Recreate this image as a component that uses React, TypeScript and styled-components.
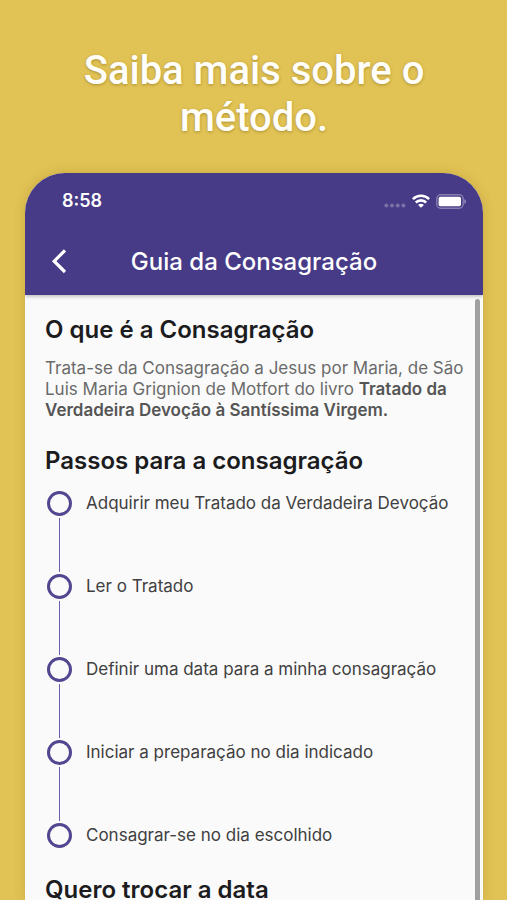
import React from "react";
import styled, { createGlobalStyle } from "styled-components";

const GlobalStyle = createGlobalStyle`
  * { box-sizing: border-box; }
  body { margin: 0; background: #e1c254; }
`;

const Page = styled.div`
  height: 100vh;
  overflow: hidden;
  display: flex;
  flex-direction: column;
  padding: 47px 24px 0 25px;
  background: #e1c254;
  font-family: Inter, "Liberation Sans", sans-serif;
`;

const Headline = styled.h1`
  margin: 0 0 32px;
  padding: 0 40px;
  color: #fffefa;
  font: 500 40px/47px Roboto, sans-serif;
  text-align: center;
  text-shadow: 0 1px 3px rgba(90, 70, 0, 0.4);
`;

const Phone = styled.main`
  flex: 1;
  min-height: 0;
  display: flex;
  flex-direction: column;
  overflow: hidden;
  border-radius: 40px 40px 0 0;
  background: #fafafa;
  box-shadow: 0 0 12px rgba(110, 80, 0, 0.2);
`;

const TopBar = styled.header`
  flex: none;
  background: #473b87;
  color: #fff;
  box-shadow: 0 1px 4px rgba(0, 0, 0, 0.3);
  z-index: 1;
`;

const StatusBar = styled.div`
  display: flex;
  align-items: center;
  justify-content: space-between;
  height: 56px;
  padding: 0 16px 0 37px;
`;

const Clock = styled.time`
  font-size: 18px;
  line-height: 24px;
  font-weight: 600;
`;

const StatusIcons = styled.div`
  display: flex;
  align-items: center;
  gap: 6px;
`;

const NavBar = styled.div`
  display: grid;
  grid-template-columns: 68px 1fr 68px;
  align-items: center;
  height: 66px;
`;

const BackButton = styled.button`
  display: flex;
  align-items: center;
  justify-content: center;
  height: 48px;
  padding: 0;
  border: 0;
  background: none;
  color: inherit;
  cursor: pointer;
`;

const Title = styled.h2`
  margin: 0;
  font-size: 24px;
  line-height: 32px;
  font-weight: 500;
  text-align: center;
  white-space: nowrap;
`;

const Body = styled.div`
  flex: 1;
  min-height: 0;
  display: flex;
  padding: 4px 3px 0 0;
`;

const Content = styled.div`
  flex: 1;
  min-width: 0;
  padding: 15px 8px 0 20px;
`;

const ScrollThumb = styled.div`
  flex: none;
  width: 5px;
  border-radius: 3px 3px 0 0;
  background: #a0a0a0;
`;

const SectionTitle = styled.h3`
  margin: 0;
  color: #1c1c1e;
  font-size: 24px;
  line-height: 32px;
  font-weight: 600;
`;

const Paragraph = styled.p`
  margin: 12px 0 24px;
  color: #6a6a6a;
  font-size: 17px;
  line-height: 21px;
`;

const Strong = styled.strong`
  color: #555;
  font-weight: 600;
`;

const Steps = styled.ol`
  margin: 14px 0 26px;
  padding: 0 0 0 2px;
  list-style: none;
`;

const Step = styled.li`
  display: grid;
  grid-template-columns: 25px 1fr;
  column-gap: 14px;
  color: #404040;
  font-size: 17px;
  line-height: 25px;
`;

const Marker = styled.span`
  height: 25px;
  border: 3px solid #51468f;
  border-radius: 50%;
`;

const Connector = styled.span`
  justify-self: center;
  width: 1px;
  height: 54px;
  margin: 2px 0;
  background: #6a5fb0;
`;

const steps = [
  "Adquirir meu Tratado da Verdadeira Devoção",
  "Ler o Tratado",
  "Definir uma data para a minha consagração",
  "Iniciar a preparação no dia indicado",
  "Consagrar-se no dia escolhido",
];

function Signal() {
  return (
    <svg width="22" height="14" viewBox="0 0 22 14" fill="#fff" fillOpacity="0.28" aria-hidden="true">
      <circle cx="2.4" cy="11.4" r="2" />
      <circle cx="8" cy="11.4" r="2" />
      <circle cx="13.7" cy="11.4" r="2" />
      <circle cx="19.4" cy="11.4" r="2" />
    </svg>
  );
}

function Wifi() {
  return (
    <svg width="18" height="14" viewBox="0 0 18 14" fill="none" stroke="#fff" strokeWidth="2.6" aria-hidden="true">
      <path d="M.9 5.1a11.6 11.6 0 0 1 16.2 0" />
      <path d="M3.8 8.5a7.4 7.4 0 0 1 10.4 0" />
      <path d="M9 13.8 6.1 11a4 4 0 0 1 5.8 0Z" fill="#fff" stroke="none" />
    </svg>
  );
}

function Battery() {
  return (
    <svg width="31" height="15" viewBox="0 0 31 15" aria-hidden="true">
      <rect x=".8" y=".8" width="26.4" height="13.4" rx="4" fill="none" stroke="#fff" strokeOpacity="0.35" strokeWidth="1.4" />
      <rect x="2.6" y="2.8" width="22.4" height="9.4" rx="1.6" fill="#fff" />
      <path d="M28.4 5.2c1.9.7 1.9 3.9 0 4.6Z" fill="#fff" fillOpacity="0.5" />
    </svg>
  );
}

export default function App() {
  return (
    <>
      <GlobalStyle />
      <Page>
        <Headline>Saiba mais sobre o método.</Headline>
        <Phone>
          <TopBar>
            <StatusBar>
              <Clock>8:58</Clock>
              <StatusIcons>
                <Signal />
                <Wifi />
                <Battery />
              </StatusIcons>
            </StatusBar>
            <NavBar>
              <BackButton type="button" aria-label="Voltar">
                <svg width="16" height="26" viewBox="0 0 16 26" fill="none" stroke="currentColor" strokeWidth="3.2" aria-hidden="true">
                  <path d="M14 1.4 3.2 12.2 14 23" />
                </svg>
              </BackButton>
              <Title>Guia da Consagração</Title>
            </NavBar>
          </TopBar>
          <Body>
            <Content>
              <SectionTitle>O que é a Consagração</SectionTitle>
              <Paragraph>
                Trata-se da Consagração a Jesus por Maria, de São Luis Maria Grignion de Motfort do livro{" "}
                <Strong>Tratado da Verdadeira Devoção à Santíssima Virgem.</Strong>
              </Paragraph>
              <SectionTitle>Passos para a consagração</SectionTitle>
              <Steps>
                {steps.map((label, i) => (
                  <Step key={label}>
                    <Marker />
                    <span>{label}</span>
                    {i < steps.length - 1 && <Connector />}
                  </Step>
                ))}
              </Steps>
              <SectionTitle>Quero trocar a data</SectionTitle>
            </Content>
            <ScrollThumb />
          </Body>
        </Phone>
      </Page>
    </>
  );
}
